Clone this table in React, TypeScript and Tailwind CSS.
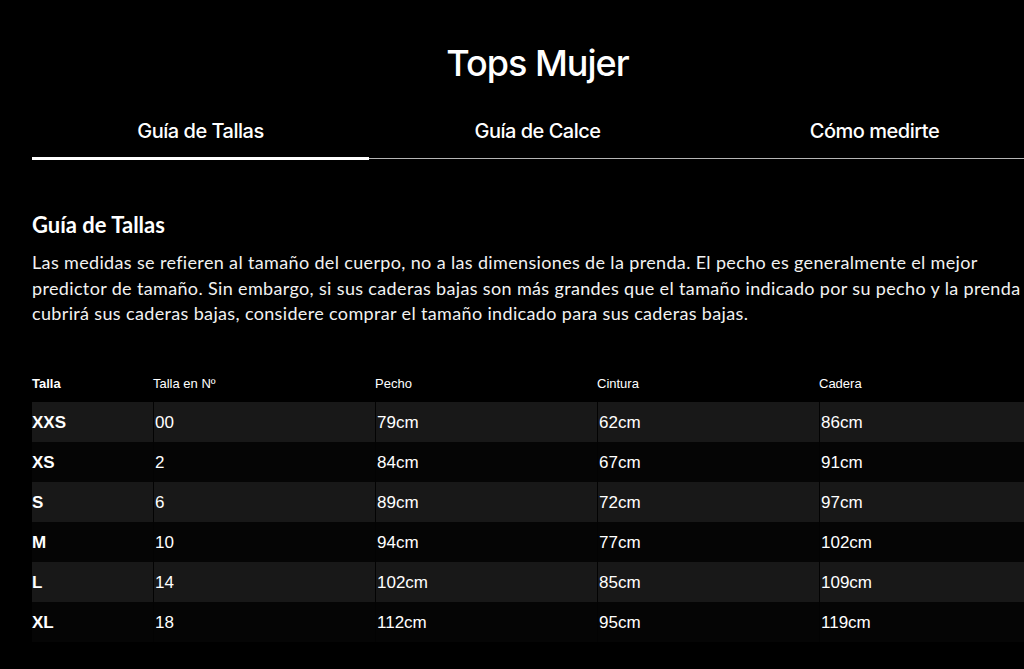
import React from "react";

const rows = [
  ["XXS", "00", "79cm", "62cm", "86cm"],
  ["XS", "2", "84cm", "67cm", "91cm"],
  ["S", "6", "89cm", "72cm", "97cm"],
  ["M", "10", "94cm", "77cm", "102cm"],
  ["L", "14", "102cm", "85cm", "109cm"],
  ["XL", "18", "112cm", "95cm", "119cm"],
];

const headers = ["Talla", "Talla en Nº", "Pecho", "Cintura", "Cadera"];

export default function App() {
  return (
    <div className="bg-black min-h-[669px] w-full overflow-hidden text-white font-['Lato',sans-serif]">
      <div className="w-[1011px] ml-[32px] pt-[40px]">
        <h1 className="text-center text-[36px] leading-[46px] font-medium font-['Inter',sans-serif] tracking-[-1px]">
          Tops Mujer
        </h1>
        <div className="mt-[24px] grid grid-cols-3">
          <div className="flex flex-col items-center">
            <div className="h-[48px] pt-[7px] text-[20px] leading-[28px] font-medium font-['Inter',sans-serif] tracking-[-0.5px]">Guía de Tallas</div>
            <div className="h-[3px] w-full bg-white mt-[-1px]"></div>
          </div>
          <div className="flex flex-col items-center">
            <div className="h-[48px] pt-[7px] text-[20px] leading-[28px] font-medium font-['Inter',sans-serif] tracking-[-0.5px]">Guía de Calce</div>
            <div className="h-[1px] w-full bg-[#b5b5b5]"></div>
          </div>
          <div className="flex flex-col items-center">
            <div className="h-[48px] pt-[7px] text-[20px] leading-[28px] font-medium font-['Inter',sans-serif] tracking-[-0.5px]">Cómo medirte</div>
            <div className="h-[1px] w-full bg-[#b5b5b5]"></div>
          </div>
        </div>
        <h2 className="mt-[51px] text-[22px] leading-[28px] font-bold">Guía de Tallas</h2>
        <p className="mt-[11px] text-[18px] leading-[25.5px] tracking-[0.35px] text-[#f2f2f2]">
          Las medidas se refieren al tamaño del cuerpo, no a las dimensiones de la prenda. El pecho es generalmente el mejor predictor de tamaño. Sin embargo, si sus caderas bajas son más grandes que el tamaño indicado por su pecho y la prenda cubrirá sus caderas bajas, considere comprar el tamaño indicado para sus caderas bajas.
        </p>
        <div className="mt-[40px] font-['Liberation_Sans',sans-serif]">
          <div className="grid grid-cols-[121px_222px_222px_222px_224px] h-[35px] items-center text-[13px]">
            {headers.map((h, i) => (
              <div key={h} className={i === 0 ? "font-bold" : ""}>{h}</div>
            ))}
          </div>
          {rows.map((r, ri) => (
            <div
              key={r[0]}
              className={`grid grid-cols-[121px_222px_222px_222px_224px] h-[40px] text-[17px] ${ri % 2 === 0 ? "bg-[#181818]" : "bg-[#050505]"}`}
            >
              {r.map((c, ci) => (
                <div
                  key={ci}
                  className={`flex items-center pt-[2px] ${ci === 0 ? "font-bold" : "border-l border-[#030303] pl-[1px]"}`}
                >
                  {c}
                </div>
              ))}
            </div>
          ))}
        </div>
      </div>
    </div>
  );
}
